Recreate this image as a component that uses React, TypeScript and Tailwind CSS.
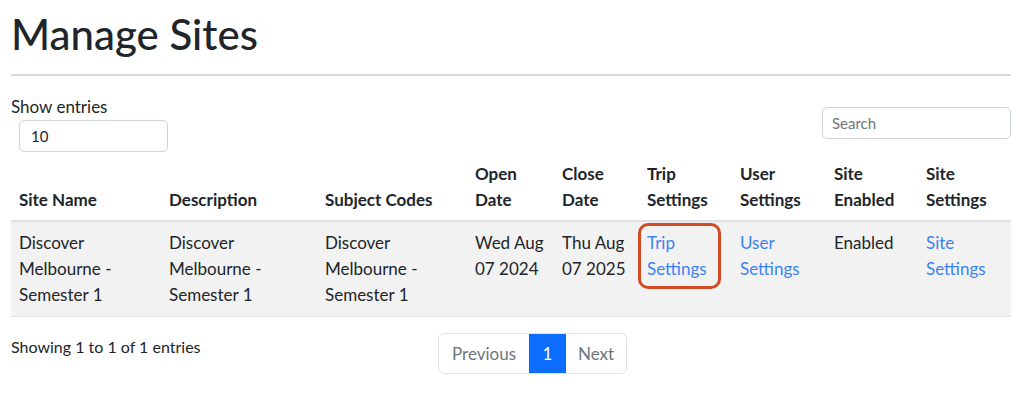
import type React from "react";

const headers = [
  { label: ["Site Name"], w: "w-[150px]" },
  { label: ["Description"], w: "w-[156px]" },
  { label: ["Subject Codes"], w: "w-[150px]" },
  { label: ["Open", "Date"], w: "w-[87px]" },
  { label: ["Close", "Date"], w: "w-[85px]" },
  { label: ["Trip", "Settings"], w: "w-[93px]" },
  { label: ["User", "Settings"], w: "w-[94px]" },
  { label: ["Site", "Enabled"], w: "w-[92px]" },
  { label: ["Site", "Settings"], w: "" },
];

const Link: React.FC<{ lines: string[] }> = ({ lines }) => (
  <a href="#" className="text-[#3b82f6] no-underline">
    {lines.map((l) => (
      <span key={l} className="block">
        {l}
      </span>
    ))}
  </a>
);

export default function App() {
  return (
    <div
      className="w-[1022px] h-[405px] bg-white text-[#212529] px-[11px] text-[17px] leading-[26px]"
      style={{ fontFamily: "'Segoe UI', Lato, 'Noto Sans', sans-serif" }}
    >
      <h1 className="pt-[9px] text-[42px] leading-[50px] font-medium">Manage Sites</h1>
      <hr className="mt-[15px] border-t-2 border-[#dadada]" />

      {/* Controls */}
      <div className="flex justify-between mt-[19px]">
        <div>
          <div className="leading-[24px]">Show entries</div>
          <div className="ml-[8px] mt-[1px] w-[149px] h-[32px] border border-[#ced4da] rounded-[5px] pl-[11px] text-[15px] leading-[30px]">
            10
          </div>
        </div>
        <div className="pt-[12px]">
          <div className="w-[189px] h-[32px] border border-[#ced4da] rounded-[5px] pl-[9px] text-[15px] leading-[30px] text-[#6c757d]">
            Search
          </div>
        </div>
      </div>

      {/* Table */}
      <div className="mt-[9px]">
        <div className="flex items-end border-b-2 border-[#dee2e6] pb-[7px]">
          {headers.map((h) => (
            <div key={h.label.join()} className={`${h.w} px-[8px] font-bold`}>
              {h.label.map((l) => (
                <div key={l}>{l}</div>
              ))}
            </div>
          ))}
        </div>
        <div className="flex items-start bg-[#f2f2f2] border-b border-[#dee2e6] py-[8px]">
          <div className="w-[150px] px-[8px]">Discover<br />Melbourne -<br />Semester 1</div>
          <div className="w-[156px] px-[8px]">Discover<br />Melbourne -<br />Semester 1</div>
          <div className="w-[150px] px-[8px]">Discover<br />Melbourne -<br />Semester 1</div>
          <div className="w-[87px] px-[8px]">Wed Aug<br />07 2024</div>
          <div className="w-[85px] px-[8px]">Thu Aug<br />07 2025</div>
          <div className="w-[93px] px-[8px] relative">
            <Link lines={["Trip", "Settings"]} />
            <div className="absolute left-[-1px] top-[-7px] w-[83px] h-[66px] border-[3px] border-[#d24a22] rounded-[10px]" />
          </div>
          <div className="w-[94px] px-[8px]">
            <Link lines={["User", "Settings"]} />
          </div>
          <div className="w-[92px] px-[8px]">Enabled</div>
          <div className="px-[8px]">
            <Link lines={["Site", "Settings"]} />
          </div>
        </div>
      </div>

      {/* Footer */}
      <div className="flex mt-[16px]">
        <div className="w-[427px] pt-[1px] text-[16px]">Showing 1 to 1 of 1 entries</div>
        <div className="flex h-[41px] border border-[#dee2e6] rounded-[6px] overflow-hidden text-[17px] leading-[39px]">
          <div className="px-[13px] text-[#6c757d]">Previous</div>
          <div className="w-[37px] text-center bg-[#0d6efd] text-white">1</div>
          <div className="px-[12px] text-[#6c757d]">Next</div>
        </div>
      </div>
    </div>
  );
}
